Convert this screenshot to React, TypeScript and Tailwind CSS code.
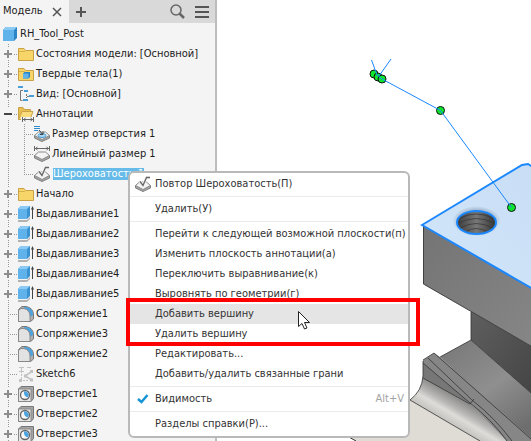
import { useState } from 'react';
import type { ReactNode } from 'react';

type Kind = 'folder' | 'bodies' | 'view' | 'annotations' | 'holeNote' | 'linear' | 'rough' | 'extrude' | 'fillet' | 'sketch' | 'hole';

type Node = {
  label: string;
  kind: Kind;
  level?: number;
  expand?: 'open' | 'closed';
  last?: boolean;
};

const nodes: Node[] = [
  { label: 'Состояния модели: [Основной]', kind: 'folder', expand: 'closed' },
  { label: 'Твердые тела(1)', kind: 'bodies', expand: 'closed' },
  { label: 'Вид: [Основной]', kind: 'view', expand: 'closed' },
  { label: 'Аннотации', kind: 'annotations', expand: 'open' },
  { label: 'Размер отверстия 1', kind: 'holeNote', level: 2 },
  { label: 'Линейный размер 1', kind: 'linear', level: 2 },
  { label: 'Шероховатость 1', kind: 'rough', level: 2, last: true },
  { label: 'Начало', kind: 'folder', expand: 'closed' },
  { label: 'Выдавливание1', kind: 'extrude', expand: 'closed' },
  { label: 'Выдавливание2', kind: 'extrude', expand: 'closed' },
  { label: 'Выдавливание3', kind: 'extrude', expand: 'closed' },
  { label: 'Выдавливание4', kind: 'extrude', expand: 'closed' },
  { label: 'Выдавливание5', kind: 'extrude', expand: 'closed' },
  { label: 'Сопряжение1', kind: 'fillet' },
  { label: 'Сопряжение3', kind: 'fillet' },
  { label: 'Сопряжение2', kind: 'fillet' },
  { label: 'Sketch6', kind: 'sketch' },
  { label: 'Отверстие1', kind: 'hole', expand: 'closed' },
  { label: 'Отверстие2', kind: 'hole', expand: 'closed' },
  { label: 'Отверстие3', kind: 'hole', expand: 'closed' },
];

const menuGroups = [
  ['Повтор Шероховатость(П)'],
  ['Удалить(У)'],
  [
    'Перейти к следующей возможной плоскости(п)',
    'Изменить плоскость аннотации(а)',
    'Переключить выравнивание(к)',
    'Выровнять по геометрии(г)',
    'Добавить вершину',
    'Удалить вершину',
    'Редактировать...',
    'Добавить/удалить связанные грани',
  ],
  ['Видимость'],
  ['Разделы справки(Р)...'],
];

function Slab() {
  return (
    <>
      <path d="M.5 9.5V12L8 15.5 15.5 12V9.5Z" fill="#a5a5a5" stroke="#808080" />
      <path d="M.5 9.5 4.5 6H11.5L15.5 9.5 8 13.5Z" fill="#f3f3f3" stroke="#8a8a8a" />
    </>
  );
}

function Folder() {
  return (
    <>
      <path d="M.5 14.5V2.5H6L7.5 4.5H15.5V14.5Z" fill="#f8d568" stroke="#c9a248" />
      <path d="M1 5.5H7" stroke="#d9b250" />
    </>
  );
}

const shapes: Record<Kind, ReactNode> = {
  folder: <Folder />,
  bodies: (
    <>
      <Folder />
      <path d="M5 7.5 6.5 6H12V11L10.5 12.5H5Z" fill="#2a84c4" />
      <path d="M5 7.5H10.5V12.5H5Z" fill="#5fb2ea" />
    </>
  ),
  view: (
    <>
      <path d="M5 4.5H2.5V14.5H4.5" fill="none" stroke="#777" />
      <path d="M8.5 8V12M9 10.5H11" fill="none" stroke="#777" strokeDasharray="2 1" />
      <path d="M0 0H5V2H0ZM6 4H10V6H6ZM11 9H16V11H11ZM5 13H10V15H5Z" fill="#4a9ed8" />
    </>
  ),
  annotations: (
    <>
      <path d="M.5 13.5V1.5H5L6.5 3.5H12.5V13.5Z" fill="#e9bd4e" stroke="#c9a248" />
      <path d="M.5 13.5 4 5.5H15L12 13.5Z" fill="#fbdc7c" stroke="#c9a248" />
      <path d="M3 11H16V16H3Z" fill="#f4f4f4" />
      <path d="M4.5 11V16M15.5 11V16M5 13.5H15M7.5 12 5.5 13.5 7.5 15M12.5 12 14.5 13.5 12.5 15" fill="none" stroke="#666" />
    </>
  ),
  holeNote: (
    <>
      <Slab />
      <ellipse cx="8" cy="9.5" rx="4" ry="2" fill="#a9d7f4" stroke="#4c9fd4" />
      <path d="M0 .5H6M0 2.5H6M0 4.5H4" stroke="#2f8ccb" />
      <path d="M5 4 8.5 8M9 5.5V8.5H6" fill="none" stroke="#444" />
    </>
  ),
  linear: (
    <>
      <Slab />
      <path d="M.5 0V5M15.5 0V5M1 2.5H15M3.5 1 1.5 2.5 3.5 4M12.5 1 14.5 2.5 12.5 4" fill="none" stroke="#666" />
    </>
  ),
  rough: (
    <>
      <Slab />
      <path d="M5 5.5 8 9.5 11.5 1.5H15" fill="none" stroke="#f4f4f4" strokeWidth="3" />
      <path d="M5 5.5 8 9.5 11.5 1.5H15" fill="none" stroke="#666" strokeWidth="1.3" />
    </>
  ),
  extrude: (
    <>
      <path d="M0 14H9L12 11V13L9 16H0Z" fill="#b2b2b2" />
      <path d="M0 3 3 0H12V10L9 13H0Z" fill="#3a92d2" />
      <path d="M0 3 3 0H12L9 3Z" fill="#8bcaf4" />
      <path d="M0 3H9V13H0Z" fill="#5fb2ea" />
      <path d="M14.5 1V13" stroke="#444" />
      <path d="M13 3.5 14.5 0 16 3.5Z" fill="#444" />
    </>
  ),
  fillet: (
    <>
      <path d="M.5 3.5 4 .5H8Q15.5 2 15.5 9V13L12.5 15.5H.5Z" fill="#b0b0b0" stroke="#777" />
      <path d="M6 1H8Q15 2 15 9L12.5 11Q12 5 7 3.5Z" fill="#4ba3df" />
      <path d="M.5 4.5 3 2.5H6Q12 4 12 10V15.5H.5Z" fill="#e2e2e2" stroke="#888" />
    </>
  ),
  sketch: (
    <g fill="none" stroke="#c2c2c2">
      <path d="M1 1.5H6M3.5 1V7M1 5.5H6M9 1.5H13" />
      <path d="M3.5 8V14M5 14.5H10" strokeDasharray="2 1" />
      <path d="M14 5.5 7 10 14 14" strokeWidth="1.5" />
      <path d="M12 4H15V7H12ZM6 8.5H9V11.5H6ZM12 12.5H15V15.5H12ZM1 13H4V16H1Z" fill="#c2c2c2" stroke="none" />
    </g>
  ),
  hole: (
    <>
      <path d="M.5 3 3 .5H15.5V12.5L13 15.5H.5Z" fill="#a5a5a5" stroke="#777" />
      <path d="M.5 3H13V15.5H.5Z" fill="#e6e6e6" stroke="#888" />
      <circle cx="7" cy="9" r="4.5" fill="#f6f6f6" stroke="#666" strokeWidth="1.3" />
      <path d="M6 5.5Q5.5 10.5 10 11.5Q12 8 9 6Q7.5 5 6 5.5Z" fill="#4ba3df" />
    </>
  ),
};

function Icon({ kind }: { kind: Kind }) {
  return (
    <svg width="16" height="16" viewBox="0 0 16 16" className="shrink-0" aria-hidden="true">
      {shapes[kind]}
    </svg>
  );
}

function Gutter({ node }: { node: Node }) {
  const dots = { stroke: '#999', strokeDasharray: '1 1' };
  if (node.level === 2) {
    return (
      <svg width="34" height="20" className="shrink-0" aria-hidden="true">
        <path d="M8.5 0V20" {...dots} />
        <path d={node.last ? 'M24.5 0V11' : 'M24.5 0V20'} {...dots} />
        <path d="M26 10.5H33" {...dots} />
      </svg>
    );
  }
  if (!node.expand) {
    return (
      <svg width="18" height="20" className="shrink-0" aria-hidden="true">
        <path d="M8.5 0V20M10 10.5H17" {...dots} />
      </svg>
    );
  }
  const open = node.expand === 'open';
  return (
    <button type="button" aria-label={node.label} aria-expanded={open} className="w-[18px] h-5 shrink-0">
      <svg width="18" height="20" aria-hidden="true">
        <path d="M8.5 0V4M8.5 16V20M14 10.5H17" {...dots} />
        {open ? (
          <path d="M4 9H12V11H4Z" fill="#444" />
        ) : (
          <path d="M4 9H7V6H9V9H12V11H9V14H7V11H4Z" fill="#8c8c8c" />
        )}
      </svg>
    </button>
  );
}

function Browser() {
  const [selected, setSelected] = useState('Шероховатость 1');

  return (
    <aside className="w-[217px] shrink-0 overflow-hidden bg-[#f4f4f4] border-r-2 border-[#bdbdbd] text-[#1c1c1c]">
      <div className="flex items-center h-[23px] bg-[#d9d9d9]">
        <div className="flex items-center justify-between w-[69px] h-full pl-[3px] pr-[7px] bg-[#f4f4f4]">
          <button type="button">Модель</button>
          <button type="button" aria-label="Закрыть">
            <svg width="10" height="10" viewBox="0 0 10 10" stroke="#555" strokeWidth="1.5">
              <path d="M1 1 9 9M9 1 1 9" />
            </svg>
          </button>
        </div>
        <button type="button" aria-label="Добавить" className="ml-[7px]">
          <svg width="10" height="10" viewBox="0 0 10 10" fill="#555">
            <path d="M0 4H4V0H6V4H10V6H6V10H4V6H0Z" />
          </svg>
        </button>
        <button type="button" aria-label="Поиск" className="ml-auto">
          <svg width="15" height="15" viewBox="0 0 15 15" fill="none" stroke="#666">
            <circle cx="6" cy="6" r="5" strokeWidth="1.5" />
            <path d="M9.5 9.5 14 14" strokeWidth="2.5" />
          </svg>
        </button>
        <button type="button" aria-label="Меню" className="ml-2.5 mr-1.5">
          <svg width="14" height="12" viewBox="0 0 14 12" fill="#555">
            <path d="M0 0H14V2H0ZM0 5H14V7H0ZM0 10H14V12H0Z" />
          </svg>
        </button>
      </div>
      <div className="flex items-center h-5 pl-[3px] gap-[3px] mt-px">
        <svg width="14" height="14" viewBox="0 0 14 14" aria-hidden="true">
          <path d="M0 3 3 0H14V11L11 14H0Z" fill="#2c85c6" />
          <path d="M0 3 3 0H14L11 3Z" fill="#8bcaf4" />
          <path d="M0 3H11V14H0Z" fill="#5fb2ea" />
        </svg>
        <span>RH_Tool_Post</span>
      </div>
      <ul>
        {nodes.map((n) => (
          <li key={n.label} className="flex items-center h-5">
            <Gutter node={n} />
            <Icon kind={n.kind} />
            <button
              type="button"
              onClick={() => setSelected(n.label)}
              className={
                selected === n.label
                  ? 'ml-[3px] leading-3 whitespace-nowrap bg-[#66bbe8] text-white'
                  : 'ml-0.5 leading-3 whitespace-nowrap'
              }
            >
              {n.label}
            </button>
          </li>
        ))}
      </ul>
    </aside>
  );
}

function ContextMenu() {
  return (
    <div role="menu" className="absolute left-32 top-[171px] w-[282px] pt-px pb-0.5 rounded-md border-2 border-[#b9b9b9] bg-white text-[#333]">
      {menuGroups.map((group, i) => (
        <div key={group[0]} role="group">
          {i > 0 && <hr className="my-0.5 border-[#ebebeb]" />}
          {group.map((label) => (
            <button
              key={label}
              type="button"
              role="menuitem"
              className={
                label === 'Добавить вершину'
                  ? 'flex items-center w-full h-5 pr-1 bg-[#e5e5e5]'
                  : 'flex items-center w-full h-5 pr-1 hover:bg-[#e5e5e5]'
              }
            >
              <span className="flex justify-center w-[25px] shrink-0">
                {i === 0 && <Icon kind="rough" />}
                {label === 'Видимость' && (
                  <svg width="12" height="10" viewBox="0 0 12 10" fill="none" stroke="#1594d6" strokeWidth="2.5">
                    <path d="M1 5 4.5 8 10.5 1" />
                  </svg>
                )}
              </span>
              <span className="whitespace-nowrap">{label}</span>
              {label === 'Видимость' && <span className="ml-auto text-[#a3a3a3]">Alt+V</span>}
            </button>
          ))}
        </div>
      ))}
    </div>
  );
}

function Scene() {
  const dots = [[374, 74], [378, 77], [382, 79], [440.5, 110.5], [511.5, 207.5]];
  return (
    <svg width="314" height="441" viewBox="217 0 314 441" className="block" aria-hidden="true">
      <defs>
        <linearGradient id="top" x1="0" y1="1" x2="1" y2="0">
          <stop offset="0" stopColor="#d3e6fa" />
          <stop offset="1" stopColor="#c8def5" />
        </linearGradient>
        <linearGradient id="side" x1="0" y1="0" x2="1" y2="1">
          <stop offset="0" stopColor="#747474" />
          <stop offset="1" stopColor="#868686" />
        </linearGradient>
        <linearGradient id="dark" x1="0" y1="0" x2="1" y2="1">
          <stop offset="0" stopColor="#5f5f5f" />
          <stop offset="1" stopColor="#454545" />
        </linearGradient>
        <linearGradient id="floor" gradientUnits="userSpaceOnUse" x1="460" y1="345" x2="520" y2="430">
          <stop offset="0" stopColor="#7c7c7c" />
          <stop offset=".5" stopColor="#8f8f8f" />
          <stop offset="1" stopColor="#6e6e6e" />
        </linearGradient>
        <linearGradient id="web" gradientUnits="userSpaceOnUse" x1="440" y1="418" x2="460" y2="384">
          <stop offset="0" stopColor="#c4c2be" />
          <stop offset=".25" stopColor="#dedcd9" />
          <stop offset=".4" stopColor="#bab9b7" />
          <stop offset=".65" stopColor="#8e8e8d" />
          <stop offset="1" stopColor="#626262" />
        </linearGradient>
        <linearGradient id="bore" x1="0" y1="0" x2="1" y2="0">
          <stop offset="0" stopColor="#3c3c3c" />
          <stop offset=".5" stopColor="#777" />
          <stop offset="1" stopColor="#333" />
        </linearGradient>
        <radialGradient id="halo">
          <stop offset=".75" stopColor="#8fa3b8" stopOpacity=".6" />
          <stop offset="1" stopColor="#8fa3b8" stopOpacity="0" />
        </radialGradient>
      </defs>
      <path d="M347 436 410 400 480 441H356Z" fill="#dfdcd5" />
      <path d="M347 436 356 441" stroke="#333" />
      <path d="M423 362V376Q422 391 410 400L480 441H510L470 403Z" fill="url(#web)" />
      <path d="M423 362 423 378 472 404Z" fill="#777" />
      <path d="M440 357 471 340 531 393V441Z" fill="url(#floor)" />
      <path d="M423 360 434 353 440 357 531 438V441H507L470 403 423 363Z" fill="#868686" />
      <path d="M471 311 531 346V393L471 340Z" fill="url(#dark)" />
      <path d="M423 226 531 288V346L423 284Z" fill="url(#side)" />
      <g fill="none" stroke="#333" strokeWidth=".8">
        <path d="M423.5 226V284L531 346M471 312V340L531 393M471 340 440 357M423 360 434 353 531 439" />
        <path d="M428 358 472 400Q495 418 512 441M423 363 470 403Q492 420 507 441M423 361V376Q422 391 410 400L480 441M423 378 470 404 474 399" />
      </g>
      <path d="M422 225 522 165 528 164 533 167V289Z" fill="url(#top)" stroke="#1b87ff" strokeWidth="2" />
      <ellipse cx="476.5" cy="221" rx="24" ry="15" fill="url(#halo)" />
      <ellipse cx="476.5" cy="222.5" rx="19.5" ry="11.5" fill="url(#bore)" />
      <g fill="none" stroke="#333" strokeOpacity=".7">
        <path d="M460 218Q476 210 493 218M459 223Q476 214 494 223M460 228Q476 219 493 228M465 232Q476 225 488 232" />
      </g>
      <ellipse cx="476.5" cy="222.5" rx="19.5" ry="11.5" fill="none" stroke="#1b87ff" strokeWidth="2" />
      <g fill="#0ce52c" stroke="#111">
        {dots.map(([x, y]) => (
          <circle key={x} cx={x} cy={y} r="4" />
        ))}
      </g>
      <path d="M371.5 60 377 75 382 79 440.5 110.5 511.5 207.5M391 59 379 76" fill="none" stroke="#1b87ff" />
    </svg>
  );
}

export default function App() {
  return (
    <div className="relative flex h-screen overflow-hidden bg-white font-['DejaVu_Sans_Condensed','Noto_Sans',sans-serif] text-[11px]">
      <Browser />
      <main className="flex-1 min-w-0 overflow-hidden">
        <Scene />
      </main>
      <ContextMenu />
      <div className="absolute left-[126px] top-[298px] w-[294px] h-12 border-4 border-[#ff0000] pointer-events-none" />
      <svg width="13" height="20" viewBox="0 0 13 20" className="absolute left-[298px] top-[311px]" aria-hidden="true">
        <path d="M.5 .5V15.5L4 12.5 6.5 18 9 17 6.5 11.5H11.5Z" fill="#fff" stroke="#222" />
      </svg>
    </div>
  );
}
